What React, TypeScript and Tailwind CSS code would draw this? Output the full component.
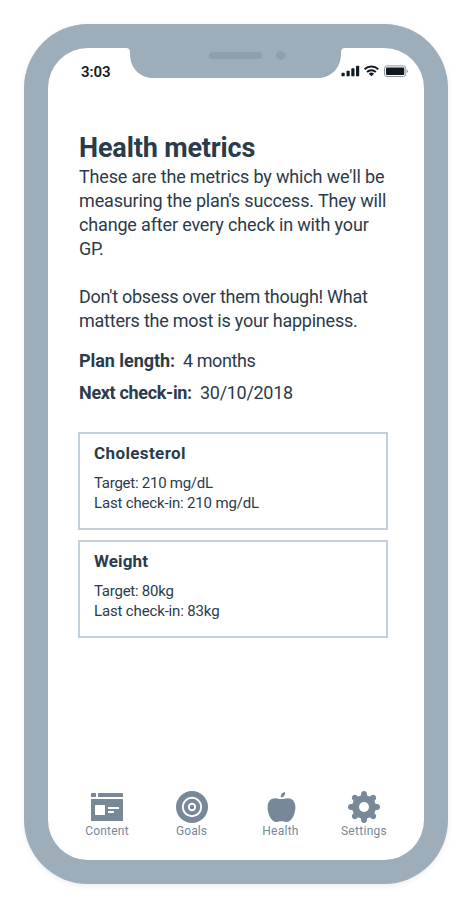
import type { ReactNode } from "react";

function Notch() {
  return (
    <svg width="219" height="30" viewBox="0 0 219 30" className="block">
      <path d="M0 0H219C216.500 0 215 1.500 215 4V6C215 20 205 30 192 30H27C14 30 4 20 4 6V4C4 1.500 2.500 0 0 0Z" fill="#9eadba" />
      <rect x="83" y="4" width="53" height="7" rx="3.500" fill="#8f9fae" />
      <circle cx="154.500" cy="7.500" r="4.600" fill="#8f9fae" />
    </svg>
  );
}

function StatusIcons() {
  return (
    <svg width="68" height="14" viewBox="0 0 68 14" className="block">
      <g fill="#111a22">
        <rect x="0.500" y="8.700" width="3.200" height="3.600" rx="0.900" />
        <rect x="5.500" y="6.700" width="3.200" height="5.600" rx="0.900" />
        <rect x="10.300" y="4.200" width="3.200" height="8.100" rx="0.900" />
        <rect x="15" y="1.700" width="3.200" height="10.600" rx="0.900" />
        <path d="M30.400 12.300L27.700 9.700A4 4 0 0 1 33.100 9.700Z" />
        <rect x="45" y="3.500" width="18.300" height="7.400" rx="0.900" />
      </g>
      <g fill="none" stroke="#111a22" strokeWidth="1.900">
        <path d="M23.600 5.300A9.800 9.800 0 0 1 37.200 5.300" />
        <path d="M26 8A6.300 6.300 0 0 1 34.800 8" />
      </g>
      <rect x="43.500" y="1.900" width="21.300" height="10.600" rx="2.400" fill="none" stroke="#90959a" strokeWidth="1" />
      <path d="M65.800 5.400Q66.900 5.900 66.900 7.200T65.800 9Z" fill="#90959a" />
    </svg>
  );
}

function ContentIcon() {
  return (
    <svg width="32" height="32" viewBox="0 0 32 32" fill="#778899">
      <rect y="2" width="5" height="4" rx="0.500" />
      <rect x="7" y="2" width="25" height="4" rx="0.500" />
      <path fillRule="evenodd" d="M0.500 8H31.500Q32 8 32 8.500V29.500Q32 30 31.500 30H0.500Q0 30 0 29.500V8.500Q0 8 0.500 8ZM4.500 14Q4 14 4 14.500V23.500Q4 24 4.500 24H13.500Q14 24 14 23.500V14.500Q14 14 13.500 14ZM17 16V18H28V16ZM17 20V22H23V20Z" />
    </svg>
  );
}

function GoalsIcon() {
  return (
    <svg width="32" height="32" viewBox="0 0 32 32">
      <circle cx="16" cy="16" r="16" fill="#778899" />
      <circle cx="16" cy="16" r="9.200" fill="none" stroke="#fff" strokeWidth="1.900" />
      <circle cx="16" cy="16" r="3.200" fill="none" stroke="#fff" strokeWidth="1.900" />
    </svg>
  );
}

function HealthIcon() {
  return (
    <svg width="32" height="32" viewBox="0 0 32 32" fill="#778899">
      <path d="M16.500 8C14.300 8 13 7.200 10.400 7.200C5.600 7.200 2.600 10.600 2.600 16C2.600 21.800 4.800 27.400 8.400 30C9.900 31.100 11.600 31 13 30.700C15.200 30.200 17.800 30.200 20 30.700C21.400 31 23.100 31.100 24.600 30C28.200 27.400 30.400 21.800 30.400 16C30.400 10.600 27.400 7.200 22.600 7.200C20 7.200 18.700 8 16.500 8Z" />
      <path d="M15.900 6.500C15.300 3.600 17 1.500 20 1C20.600 4.100 18.800 6.300 15.900 6.500Z" />
    </svg>
  );
}

const teeth = [0, 45, 90, 135, 180, 225, 270, 315];

function SettingsIcon() {
  return (
    <svg width="32" height="32" viewBox="0 0 32 32">
      <g fill="#778899">
        <circle cx="16" cy="16" r="11.800" />
        {teeth.map((a) => (
          <path key={a} transform={`rotate(${a} 16 16)`} d="M11 6.200C13 5.200 13.100 4.200 13.100 2.800C13.100 1.200 14.400 0 16 0S18.900 1.200 18.900 2.800C18.900 4.200 19 5.200 21 6.200Z" />
        ))}
      </g>
      <circle cx="16" cy="16" r="5" fill="#fff" />
    </svg>
  );
}

function Card({ title, children }: { title: ReactNode; children: ReactNode }) {
  return (
    <section className="h-[98px] border-2 border-[#c3cfda] pl-3.5 pt-[7px]">
      <h2 className="text-[17px] leading-6 font-bold">{title}</h2>
      <div className="mt-2 text-[15px] leading-5">{children}</div>
    </section>
  );
}

function Tab({ icon, children }: { icon: ReactNode; children: ReactNode }) {
  return (
    <div className="flex flex-col items-center text-[12px] leading-4 text-[#778899]">
      {icon}
      {children}
    </div>
  );
}

export default function App() {
  return (
    <div className="h-[908px] w-[472px] bg-white p-6 font-['Roboto',sans-serif] text-[#2b3b4a]">
      <div className="h-[860px] rounded-[64px] bg-[#9eadba] p-6 shadow-[0_2px_6px_rgba(0,0,0,0.08)]">
        <div className="flex h-[812px] flex-col rounded-[40px] bg-white">
          <header className="flex h-[30px] shrink-0 text-[#111a22]">
            <div className="w-[78px] shrink-0 pt-[14px] pl-[33px] text-[15px] leading-5 font-semibold tracking-[-0.1px]">3:03</div>
            <div className="w-[219px] shrink-0">
              <Notch />
            </div>
            <div className="-ml-1 pt-4">
              <StatusIcons />
            </div>
          </header>
          <main className="mt-[53px] px-[31px] text-[18px] leading-6 whitespace-nowrap">
            <h1 className="pt-px text-[27px] leading-8 font-bold tracking-[-0.15px]">Health metrics</h1>
            <p className="mt-px">
              <span className="block tracking-[-0.157px]">These are the metrics by which we'll be</span>
              <span className="block tracking-[-0.16px]">measuring the plan's success. They will</span>
              <span className="block tracking-[-0.16px]">change after every check in with your</span>
              <span className="block tracking-[-0.384px]">GP.</span>
            </p>
            <p className="mt-6">
              <span className="block tracking-[-0.268px]">Don't obsess over them though! What</span>
              <span className="block tracking-[-0.232px]">matters the most is your happiness.</span>
            </p>
            <div className="mt-4 flex gap-2">
              <b className="w-[96px] tracking-[-0.06px]">Plan length:</b>
              <span className="tracking-[-0.42px]">4 months</span>
            </div>
            <div className="mt-2 flex gap-2">
              <b className="w-[113px] tracking-[-0.32px]">Next check-in:</b>
              <span className="tracking-[-0.3px]">30/10/2018</span>
            </div>
          </main>
          <div className="mt-[27px] mr-[36px] ml-[30px] flex flex-col gap-2.5">
            <Card title={<span className="tracking-[0.385px]">Cholesterol</span>}>
              <p className="tracking-[-0.256px]">Target: 210 mg/dL</p>
              <p className="tracking-[-0.165px]">Last check-in: 210 mg/dL</p>
            </Card>
            <Card title={<span className="tracking-[0.15px]">Weight</span>}>
              <p className="tracking-[-0.25px]">Target: 80kg</p>
              <p className="tracking-[-0.15px]">Last check-in: 83kg</p>
            </Card>
          </div>
          <nav className="mt-auto mb-[21px] ml-[17px] grid grid-cols-[84px_85px_93px_74px]">
            <Tab icon={<ContentIcon />}>
              <span className="tracking-[0.2px]">Content</span>
            </Tab>
            <Tab icon={<GoalsIcon />}>
              <span className="tracking-[0.05px]">Goals</span>
            </Tab>
            <Tab icon={<HealthIcon />}>
              <span className="tracking-[0.25px]">Health</span>
            </Tab>
            <Tab icon={<SettingsIcon />}>
              <span className="tracking-[0.3px]">Settings</span>
            </Tab>
          </nav>
        </div>
      </div>
    </div>
  );
}
